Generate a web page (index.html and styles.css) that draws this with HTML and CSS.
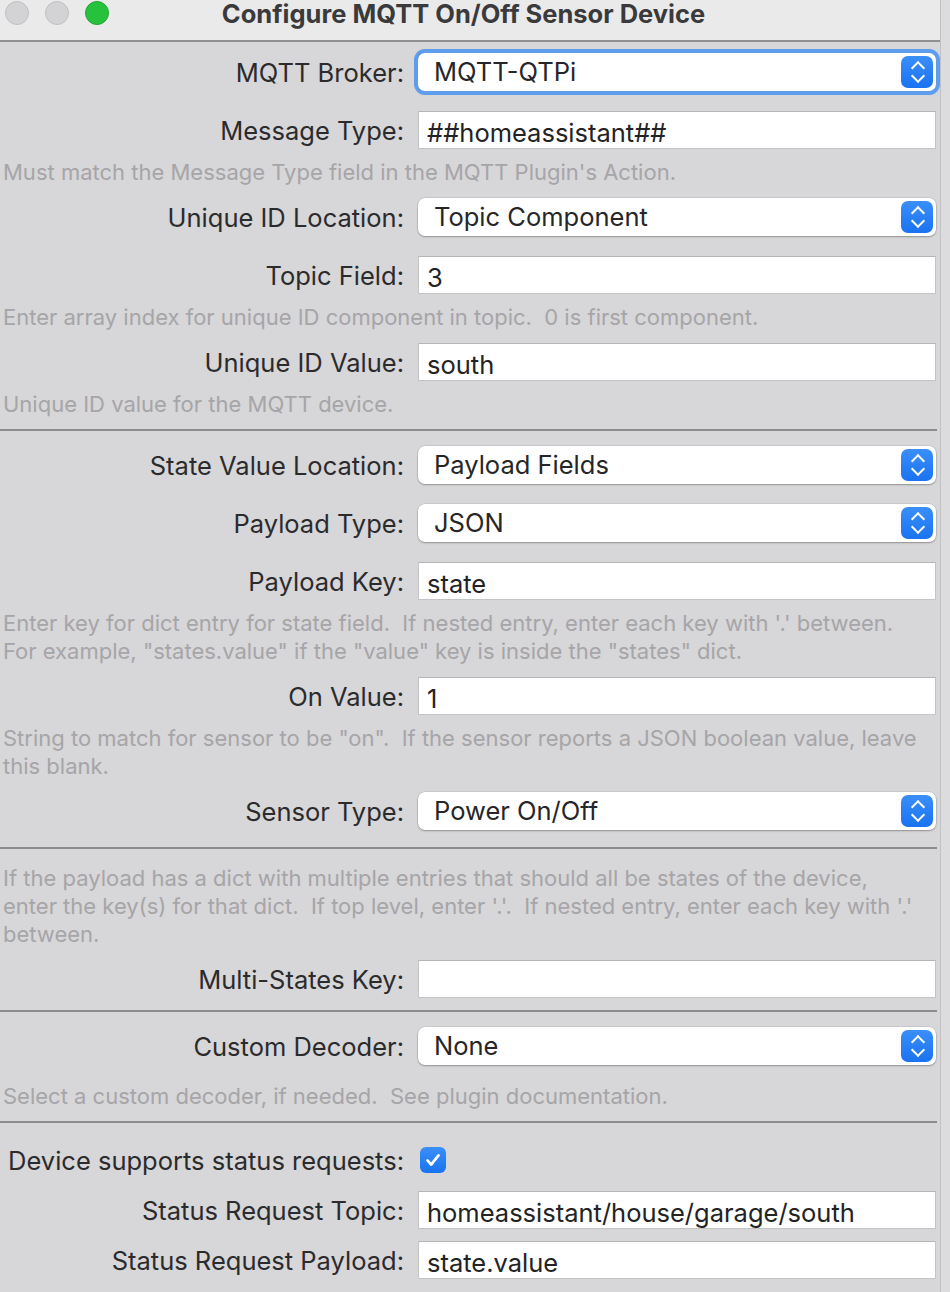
FILE: index.html
```html
<!DOCTYPE html>
<html lang="en">
<head>
    <meta charset="UTF-8">
    <title>Configure MQTT On/Off Sensor Device</title>
    <link rel="stylesheet" href="styles.css">
</head>
<body>
    <div class="window">
        <!-- Title bar -->
        <div class="titlebar">
            <div class="traffic-lights">
                <span class="light"></span>
                <span class="light"></span>
                <span class="light green"></span>
            </div>
            <div class="title">Configure MQTT On/Off Sensor Device</div>
        </div>

        <!-- Config form -->
        <div class="form">
            <div class="row">
                <label>MQTT Broker:</label>
                <div class="popup focused">MQTT-QTPi<span class="stepper"></span></div>
            </div>
            <div class="row">
                <label>Message Type:</label>
                <div class="field">##homeassistant##</div>
            </div>
            <p class="help">Must match the Message Type field in the MQTT Plugin's Action.</p>

            <div class="row">
                <label>Unique ID Location:</label>
                <div class="popup">Topic Component<span class="stepper"></span></div>
            </div>
            <div class="row">
                <label>Topic Field:</label>
                <div class="field">3</div>
            </div>
            <p class="help">Enter array index for unique ID component in topic.&nbsp; 0 is first component.</p>
            <div class="row">
                <label>Unique ID Value:</label>
                <div class="field">south</div>
            </div>
            <p class="help">Unique ID value for the MQTT device.</p>

            <hr class="separator">

            <div class="row">
                <label>State Value Location:</label>
                <div class="popup">Payload Fields<span class="stepper"></span></div>
            </div>
            <div class="row">
                <label>Payload Type:</label>
                <div class="popup">JSON<span class="stepper"></span></div>
            </div>
            <div class="row">
                <label>Payload Key:</label>
                <div class="field">state</div>
            </div>
            <p class="help">Enter key for dict entry for state field.&nbsp; If nested entry, enter each key with '.' between.<br>For example, "states.value" if the "value" key is inside the "states" dict.</p>
            <div class="row">
                <label>On Value:</label>
                <div class="field">1</div>
            </div>
            <p class="help">String to match for sensor to be "on".&nbsp; If the sensor reports a JSON boolean value, leave<br>this blank.</p>
            <div class="row">
                <label>Sensor Type:</label>
                <div class="popup">Power On/Off<span class="stepper"></span></div>
            </div>

            <hr class="separator loose">

            <p class="help">If the payload has a dict with multiple entries that should all be states of the device,<br>enter the key(s) for that dict.&nbsp; If top level, enter '.'.&nbsp; If nested entry, enter each key with '.'<br>between.</p>
            <div class="row">
                <label>Multi-States Key:</label>
                <div class="field"></div>
            </div>

            <hr class="separator">

            <div class="row">
                <label>Custom Decoder:</label>
                <div class="popup">None<span class="stepper"></span></div>
            </div>
            <p class="help loose">Select a custom decoder, if needed.&nbsp; See plugin documentation.</p>

            <hr class="separator">

            <div class="row check-row">
                <label>Device supports status requests:</label>
                <div class="check">
                    <span class="checkbox">
                        <svg viewBox="0 0 24 24"><path d="M6 12.5l4 4.5 8-10"/></svg>
                    </span>
                </div>
            </div>
            <div class="row tight">
                <label>Status Request Topic:</label>
                <div class="field">homeassistant/house/garage/south</div>
            </div>
            <div class="row tight">
                <label>Status Request Payload:</label>
                <div class="field">state.value</div>
            </div>
        </div>
    </div>
</body>
</html>
```

FILE: styles.css
```css
* {
    margin: 0;
    padding: 0;
    box-sizing: border-box;
}

body {
    font-family: Inter, "Liberation Sans", Arial, sans-serif;
    background: #dcdbdd;
    color: #2a2a2c;
    width: 950px;
    height: 1292px;
    overflow: hidden;
}

.window {
    width: 941px;
    height: 1292px;
    background: #d7d6d8;
    border-right: 1px solid #c2c1c3;
}

/* Title bar */
.titlebar {
    height: 42px;
    background: #eaeaeb;
    border-bottom: 2px solid #8f8e90;
    display: flex;
    align-items: flex-start;
}

.traffic-lights {
    display: flex;
    gap: 16px;
    padding: 1px 0 0 5px;
}

.light {
    width: 24px;
    height: 24px;
    border-radius: 50%;
    background: #d3d2d4;
    border: 1px solid #c0bfc1;
}

.light.green {
    background: #27c23b;
    border-color: #1fa631;
}

.title {
    flex: 1;
    text-align: center;
    font-size: 25.5px;
    font-weight: 700;
    color: #3a3a3c;
    line-height: 28px;
    margin-left: -122px;
}

/* Form */
.form {
    padding-top: 11px;
}

.row {
    display: grid;
    grid-template-columns: 404px 518px;
    column-gap: 14px;
    align-items: center;
    height: 38px;
}

.row label {
    text-align: right;
    font-size: 25.5px;
    color: #2b2b2d;
    white-space: nowrap;
}

.row + .row { margin-top: 20px; }
.help + .row { margin-top: 12px; }
.row + .help { margin-top: 9px; }
.help + .separator { margin-top: 11px; }
.row + .separator { margin-top: 12px; }
.separator + .row { margin-top: 15px; }
.separator + .help { margin-top: 15px; }

.separator.loose { margin-top: 17px; }
.help.loose { margin-top: 17px; }
.row.check-row { margin-top: 18px; }
.row.tight { margin-top: 12px; }

.help {
    font-size: 22px;
    line-height: 28px;
    color: #a6a5a8;
    padding-left: 3px;
    white-space: nowrap;
}

.separator {
    border: none;
    height: 2px;
    width: 937px;
    background: #8d8c8e;
}

/* Text field */
.field {
    height: 38px;
    background: #fff;
    border: 1px solid #c4c3c5;
    border-top-color: #b5b4b6;
    font-size: 25.5px;
    line-height: 42px;
    padding-left: 8px;
    color: #232325;
    overflow: hidden;
    white-space: nowrap;
}

/* Popup button */
.popup {
    height: 38px;
    background: #fff;
    border-radius: 7px;
    box-shadow: 0 0 0 0.5px rgba(0,0,0,0.12), 0 1px 2px rgba(0,0,0,0.28);
    font-size: 25.5px;
    line-height: 38px;
    padding-left: 16px;
    padding-right: 3px;
    color: #262628;
    display: flex;
    justify-content: space-between;
    align-items: center;
}

.popup.focused {
    box-shadow: 0 0 0 4px #5e9cee, 0 1px 2px rgba(0,0,0,0.28);
}

.stepper {
    width: 32px;
    height: 32px;
    border-radius: 7px;
    background: linear-gradient(180deg, #3a8ff9, #1a73f0);
    position: relative;
}

.stepper::before,
.stepper::after {
    content: '';
    position: absolute;
    left: 12px;
    width: 8px;
    height: 8px;
    border-left: 2.5px solid #fff;
    border-top: 2.5px solid #fff;
}

.stepper::before {
    top: 7px;
    transform: rotate(45deg);
}

.stepper::after {
    top: 15px;
    transform: rotate(225deg);
}

/* Checkbox */
.check {
    display: flex;
    align-items: center;
    padding-left: 2px;
}

.checkbox {
    width: 26px;
    height: 26px;
    border-radius: 6px;
    background: linear-gradient(180deg, #3a8ff9, #1a73f0);
    display: flex;
    align-items: center;
    justify-content: center;
}

.checkbox svg {
    width: 22px;
    height: 22px;
    fill: none;
    stroke: #fff;
    stroke-width: 3;
    stroke-linecap: round;
    stroke-linejoin: round;
}
```
